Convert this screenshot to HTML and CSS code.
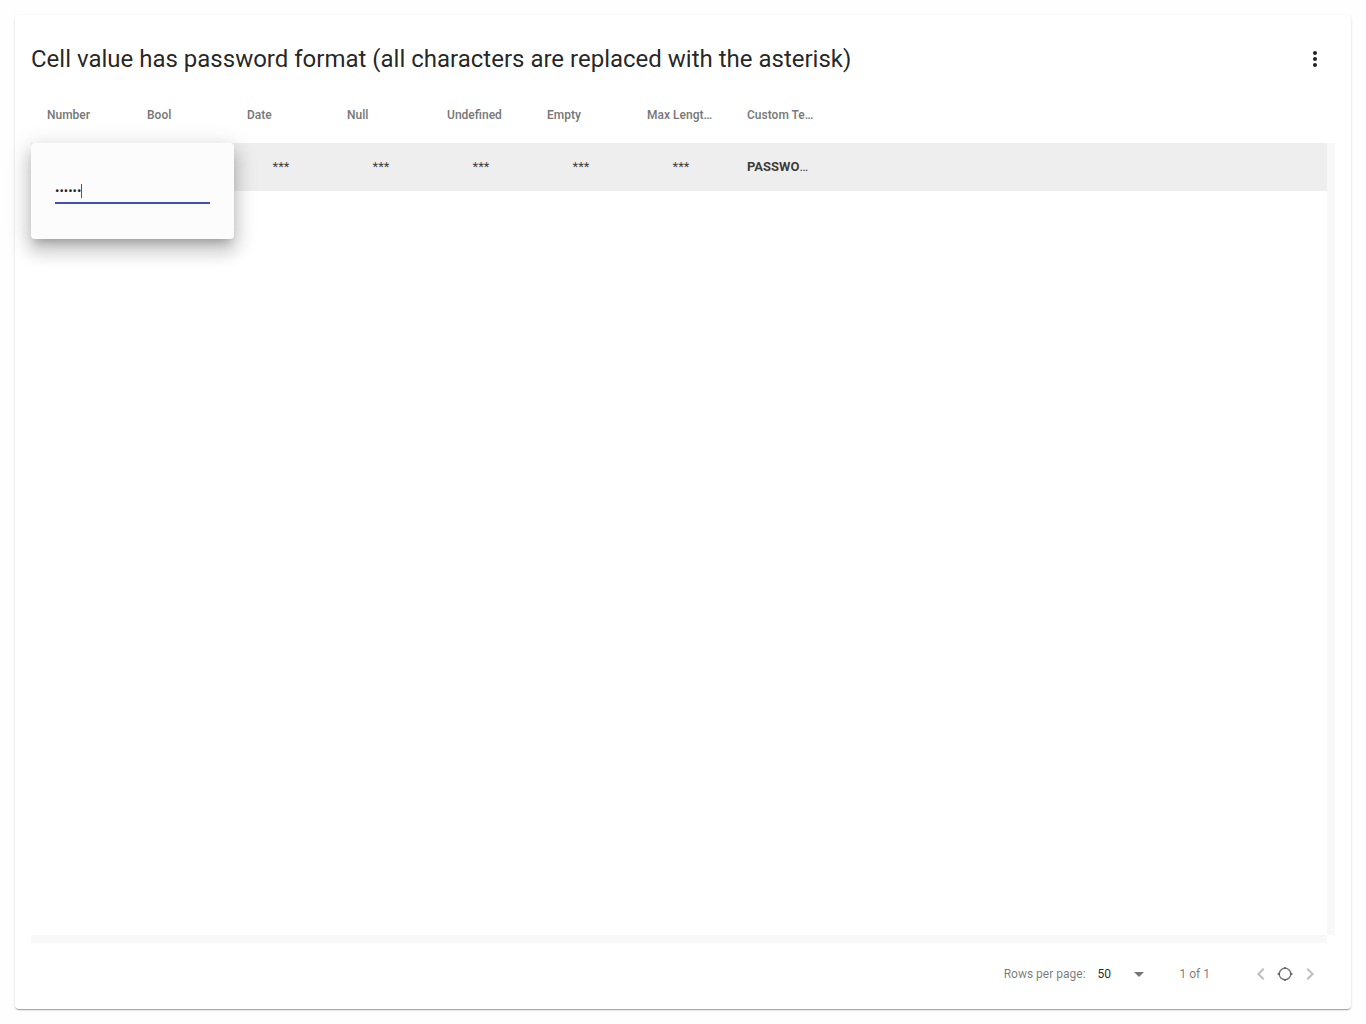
FILE: index.html
```html
<!DOCTYPE html>
<html lang="en">
<head>
<meta charset="utf-8">
<title>Password format</title>
<link rel="stylesheet" href="styles.css">
</head>
<body>
<main class="card">
  <header class="toolbar">
    <h1 class="title">Cell value has password format (all characters are replaced with the asterisk)</h1>
    <button class="icon-button" type="button" aria-label="Menu">
      <svg class="icon" viewBox="0 0 24 24"><path d="M12 8c1.1 0 2-.9 2-2s-.9-2-2-2-2 .9-2 2 .9 2 2 2zm0 2c-1.1 0-2 .9-2 2s.9 2 2 2 2-.9 2-2-.9-2-2-2zm0 6c-1.1 0-2 .9-2 2s.9 2 2 2 2-.9 2-2-.9-2-2-2z"/></svg>
    </button>
  </header>
  <section class="view">
    <table class="grid">
      <colgroup>
        <col class="col"><col class="col"><col class="col"><col class="col"><col class="col"><col class="col"><col class="col"><col class="col"><col>
      </colgroup>
      <thead>
        <tr><th>Number</th><th>Bool</th><th>Date</th><th>Null</th><th>Undefined</th><th>Empty</th><th>Max Lengt…</th><th>Custom Te…</th><td></td></tr>
      </thead>
      <tbody>
        <tr><td></td><td></td><td>***</td><td>***</td><td>***</td><td>***</td><td>***</td><td class="custom"><b>PASSWO</b>…</td><td></td></tr>
      </tbody>
    </table>
    <div class="track track-vertical"></div>
    <div class="track track-horizontal"></div>
    <form class="editor">
      <input class="editor-input" type="password" value="123456" aria-label="Number" autocomplete="off">
      <span class="caret"></span>
    </form>
  </section>
  <footer class="pager">
    <label for="page-size">Rows per page:</label>
    <span class="select-box">
      <select id="page-size" class="page-size"><option>50</option></select>
      <svg class="arrow" viewBox="0 0 10 5"><path d="M0 0h10L5 5z"/></svg>
    </span>
    <span class="range">1 of 1</span>
    <nav class="pages">
      <button class="page-button" type="button" aria-label="Previous page" disabled><svg class="icon" viewBox="0 0 24 24"><path d="M15.41 7.41L14 6l-6 6 6 6 1.41-1.41L10.83 12z"/></svg></button>
      <button class="page-button" type="button" aria-label="Current page"><svg class="icon" viewBox="0 0 24 24"><circle cx="12" cy="12" r="5.8" fill="none" stroke="currentColor" stroke-width="1.4"/><path d="M4.4 11.300h2.200v1.400H4.400zM17.400 11.300h2.200v1.400h-2.200zM11 5.300h2v1h-2zM11 17.700h2v1h-2z"/></svg></button>
      <button class="page-button" type="button" aria-label="Next page" disabled><svg class="icon" viewBox="0 0 24 24"><path d="M10 6L8.590 7.410 13.170 12l-4.580 4.590L10 18l6-6z"/></svg></button>
    </nav>
  </footer>
</main>
</body>
</html>
```
FILE: styles.css
```css
* {
  box-sizing: border-box;
}

body {
  display: flex;
  min-height: 100vh;
  margin: 0;
  padding: 15px;
  background: #fefefe;
  color: rgba(0, 0, 0, 0.87);
  font-family: Roboto, sans-serif;
  font-size: 13px;
}

button,
input,
select {
  font: inherit;
}

.card {
  display: flex;
  flex: 1;
  flex-direction: column;
  min-width: 0;
  padding: 16px 16px 0;
  border-radius: 4px;
  background: #fff;
  box-shadow: 0 2px 1px -1px rgba(0, 0, 0, 0.2), 0 1px 1px 0 rgba(0, 0, 0, 0.14), 0 1px 3px 0 rgba(0, 0, 0, 0.12);
}

.toolbar {
  display: flex;
  align-items: center;
  justify-content: space-between;
  height: 56px;
}

.title {
  margin: 0;
  font-size: 24px;
  font-weight: 400;
  line-height: 32px;
}

.icon-button,
.page-button {
  display: grid;
  place-items: center;
  padding: 0;
  border: 0;
  background: none;
  color: inherit;
}

.icon-button {
  width: 40px;
  height: 40px;
}

.icon {
  display: block;
  width: 24px;
  height: 24px;
  fill: currentColor;
}

.view {
  position: relative;
  display: grid;
  flex: 1;
  grid-template-columns: 1fr 8px;
  grid-template-rows: 56px 1fr 8px;
}

.grid {
  grid-row: 1 / 3;
  align-self: start;
  width: 100%;
  border-collapse: collapse;
  table-layout: fixed;
}

.col {
  width: 100px;
}

.grid th,
.grid td {
  overflow: hidden;
  padding: 0 16px;
  text-overflow: ellipsis;
  white-space: nowrap;
}

.grid th {
  height: 56px;
  color: rgba(0, 0, 0, 0.54);
  font-size: 12px;
  font-weight: 600;
  text-align: left;
}

.grid tbody td {
  height: 48px;
  padding-bottom: 2px;
  background: #eee;
  color: rgba(0, 0, 0, 0.77);
  text-align: center;
}

.grid tbody .custom {
  text-align: left;
}

.track {
  background: #f8f8f8;
}

.track-vertical {
  grid-row: 2;
  grid-column: 2;
}

.track-horizontal {
  grid-row: 3;
  grid-column: 1;
}

.editor {
  position: absolute;
  top: 56px;
  left: 0;
  width: 203px;
  height: 96px;
  padding: 36px 24px;
  border-radius: 4px;
  background: #fcfcfc;
  box-shadow: 0 7px 8px -4px rgba(0, 0, 0, 0.2), 0 12px 17px 2px rgba(0, 0, 0, 0.14), 0 5px 22px 4px rgba(0, 0, 0, 0.12);
}

.editor-input {
  display: block;
  width: 100%;
  height: 25px;
  padding: 0;
  border: 0;
  border-bottom: 2px solid #3f51b5;
  outline: 0;
  background: none;
  color: rgba(0, 0, 0, 0.87);
  caret-color: #3f51b5;
}

.caret {
  position: absolute;
  top: 41px;
  left: 50px;
  width: 1px;
  height: 14px;
  background: #3f51b5;
}

.pager {
  display: flex;
  align-items: center;
  justify-content: flex-end;
  height: 66px;
  padding: 0 13px 4px 0;
  color: rgba(0, 0, 0, 0.54);
  font-size: 12px;
}

.select-box {
  display: flex;
  align-items: center;
  width: 46px;
  margin-left: 12px;
}

.page-size {
  flex: 1;
  padding: 0;
  border: 0;
  appearance: none;
  background: none;
  color: rgba(0, 0, 0, 0.87);
}

.arrow {
  width: 10px;
  height: 5px;
  fill: currentColor;
}

.range {
  margin: 0 39px 0 36px;
}

.pages {
  display: grid;
  grid-template-columns: 24px 24px 25px;
}

.page-button:last-child {
  justify-items: end;
}

.page-button:disabled {
  color: rgba(0, 0, 0, 0.26);
}
```
